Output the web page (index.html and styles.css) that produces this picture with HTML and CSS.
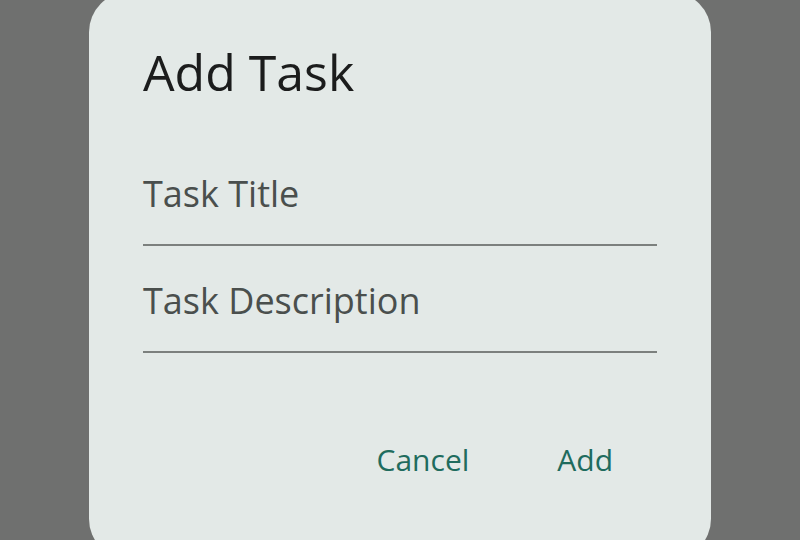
FILE: index.html
```html
<!DOCTYPE html>
<html>
<head>
<meta charset="utf-8">
<link rel="stylesheet" href="styles.css">
</head>
<body>
<div class="dialog">
  <h1 class="title">Add Task</h1>
  <div class="field"><span class="label">Task Title</span></div>
  <div class="field"><span class="label">Task Description</span></div>
  <div class="actions">
    <span class="btn">Cancel</span>
    <span class="btn">Add</span>
  </div>
</div>
</body>
</html>
```

FILE: styles.css
```css
html, body {
  margin: 0;
  padding: 0;
  height: 100%;
  overflow: hidden;
}
body {
  background: #6f706f;
  font-family: "Open Sans", "Noto Sans", sans-serif;
}
.dialog {
  box-sizing: border-box;
  margin: -8px 0 0 89px;
  width: 622px;
  height: 567px;
  background: #e3e9e7;
  border-radius: 40px;
  padding: 0 54px;
}
.title {
  margin: 0 0 37px;
  padding-top: 50px;
  font-size: 50px;
  line-height: 60px;
  font-weight: 400;
  color: #1b1c1c;
}
.field {
  height: 107px;
  box-sizing: border-box;
  border-bottom: 2px solid #7c807e;
  display: flex;
  align-items: flex-end;
  padding-bottom: 28px;
}
.label {
  font-size: 36px;
  line-height: 44px;
  color: #4a4f4d;
}
.actions {
  display: flex;
  justify-content: flex-end;
  gap: 88px;
  padding-top: 89px;
  padding-right: 44px;
}
.btn {
  font-size: 30px;
  line-height: 36px;
  color: #1f6c5e;
}
```
